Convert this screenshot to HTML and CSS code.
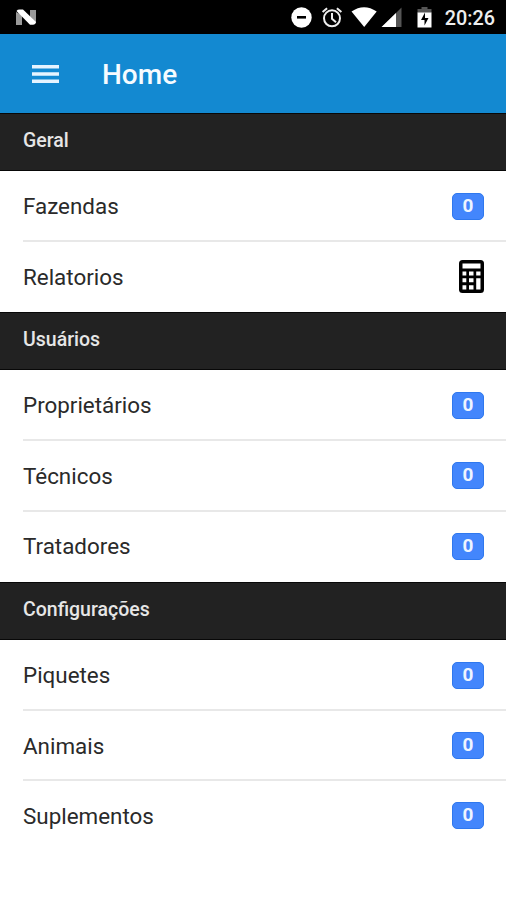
FILE: index.html
```html
<!DOCTYPE html>
<html lang="pt-BR">
<head>
<meta charset="utf-8">
<meta name="viewport" content="width=device-width, initial-scale=1">
<title>Home</title>
<link rel="stylesheet" href="styles.css">
</head>
<body>
<div class="status">
  <svg class="notif" viewBox="0 0 20 17" width="20" height="17"><path fill="#999" d="M0 3l6 3v10H0zM14 1h6v13l-6-3z"/><path fill="#fff" d="M.5 2Q1.500 .6 3.500 .6H7L20 13Q19.500 15.800 17 15.800H14z"/></svg>
  <div class="tray">
    <svg viewBox="290 7 142 22" width="142" height="22">
      <circle cx="301.500" cy="17.500" r="10.200" fill="#fff"/><path d="M297 17.300h9" stroke="#000" stroke-width="2.600"/>
      <g fill="none" stroke="#eee" stroke-width="2"><circle cx="332" cy="18.300" r="8"/><path d="M332 13v5.800l4 3.500M322.600 12l4.500-3.800M341.400 12l-4.500-3.800"/></g>
      <path fill="#fff" d="M351.500 11.500Q364 3 376.700 11.500L364.200 27z"/>
      <path fill="#555" d="M401.500 7.500V27H382z"/><path fill="#fff" d="M396 13v14H381.500z"/>
      <path fill="#555" d="M417.500 13V9h4V7h6v2h4v4z"/><path fill="#fff" d="M417.500 12.500h14V27.500h-14z"/><path fill="#000" d="M425 12.500l-4 7.500h3.500v5.500l4-7.500h-3.500z"/>
    </svg>
    <span class="clock">20:26</span>
  </div>
</div>
<header class="toolbar">
  <svg class="menu" viewBox="0 0 27 18" width="27" height="18"><path fill="#e6f4ff" d="M0 0h27v3.500H0zM0 7.200h27v3.500H0zM0 14.400h27v3.500H0z"/></svg>
  <h1>Home</h1>
</header>
<main>
  <section>
    <h2>Geral</h2>
    <ul>
      <li><span>Fazendas</span><b class="badge">0</b></li>
      <li><span>Relatorios</span>
        <svg class="calc" viewBox="0 0 25 33" width="25" height="33"><rect width="25" height="33" rx="3.500" fill="#000"/><path fill="#fff" d="M3.500 3.500h18v5h-18zM3.500 11.500h3.800v4H3.500zM10 11.500h4.500v4H10zM17.200 11.500h4.300v4h-4.300zM3.500 18.300h3.800v4H3.500zM10 18.300h4.500v4H10zM3.500 25.200h3.800v4.300H3.500zM10 25.200h4.500v4.300H10zM17.200 18.300h4.300v11.200h-4.300z"/></svg>
      </li>
    </ul>
  </section>
  <section>
    <h2>Usuários</h2>
    <ul>
      <li><span>Proprietários</span><b class="badge">0</b></li>
      <li><span>Técnicos</span><b class="badge">0</b></li>
      <li><span>Tratadores</span><b class="badge">0</b></li>
    </ul>
  </section>
  <section>
    <h2>Configurações</h2>
    <ul>
      <li><span>Piquetes</span><b class="badge">0</b></li>
      <li><span>Animais</span><b class="badge">0</b></li>
      <li><span>Suplementos</span><b class="badge">0</b></li>
    </ul>
  </section>
</main>
</body>
</html>
```
FILE: styles.css
```css
* { box-sizing: border-box; }
body { margin: 0; min-height: 900px; background: #fff; font-family: Roboto, "Liberation Sans", sans-serif; color: #2a2a2a; overflow: hidden; }
svg { display: block; flex: none; }
.status { display: flex; justify-content: space-between; height: 34px; padding: 7px 11px 0 16px; background: #000; }
.notif { margin-top: 2px; }
.tray { display: flex; gap: 13px; }
.clock { font-size: 19.800px; line-height: 23px; font-weight: 500; color: #eee; }
.toolbar { display: flex; align-items: center; height: 79px; padding-left: 32px; background: #1389d1; }
.menu { margin-top: 1px; }
h1 { margin: 2px 0 0 43px; font-size: 28px; line-height: 36px; font-weight: 500; color: #f6fbff; }
h2 { margin: 0; height: 58px; padding: 15px 23px 0; background: #222; border-top: 1px solid #080808; border-bottom: 1px solid #080808; font-size: 19.500px; line-height: 24px; font-weight: 500; color: #e6e6e6; }
ul { margin: 0; padding: 0 0 0 23px; list-style: none; }
li { display: flex; align-items: center; justify-content: space-between; height: 70.400px; padding: 1px 22px 0 0; border-bottom: 2px solid #e8e8e8; font-size: 22.400px; }
li:first-child { height: 71.400px; padding-top: 1.500px; }
li:last-child { height: 70px; border-bottom-color: transparent; }
section:first-child li:last-child { height: 69.500px; padding-top: 1px; }
.badge { width: 32px; height: 27px; border-radius: 5px; background: #4386fc; border: 1px solid #2f78ee; color: #eef5ff; font-size: 19px; line-height: 23px; font-weight: 700; text-align: center; }
```
